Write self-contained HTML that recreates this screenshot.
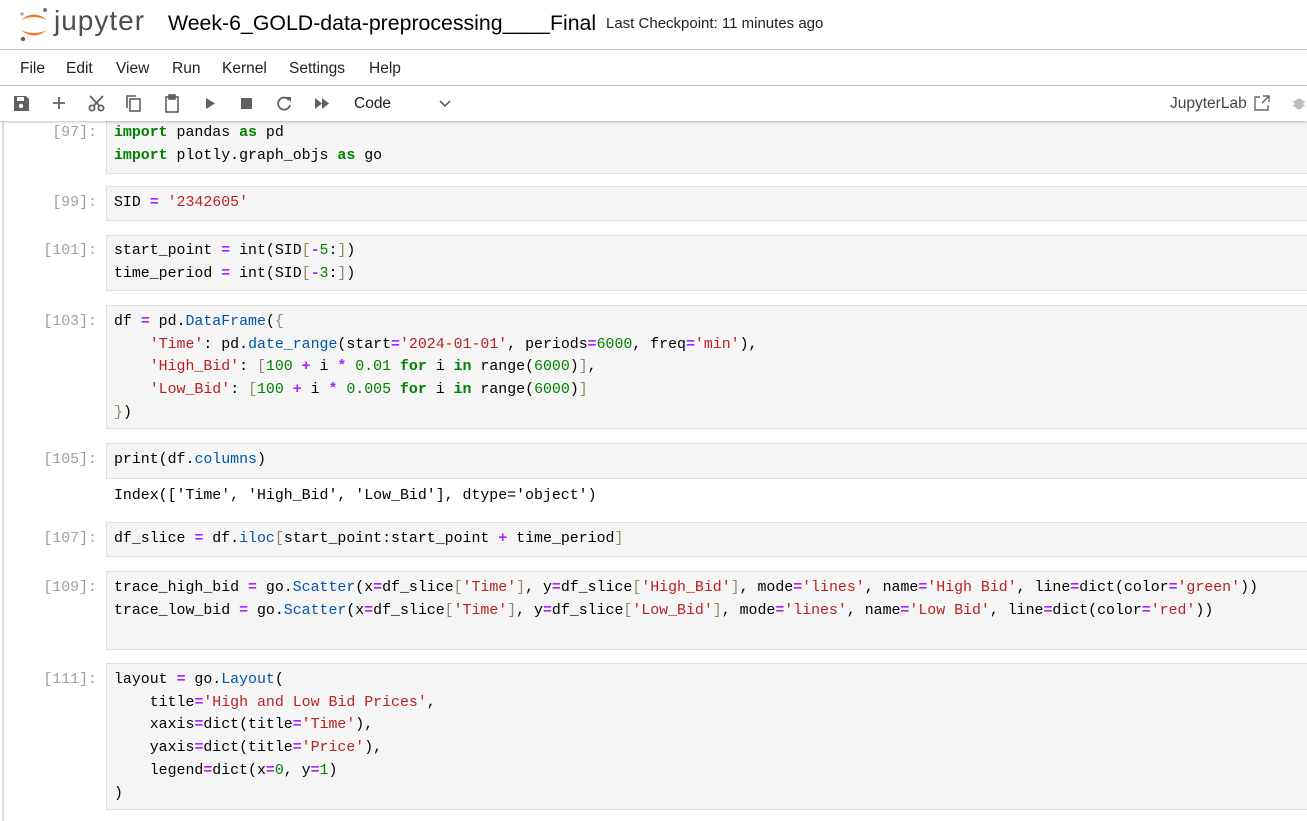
<!DOCTYPE html>
<html><head><meta charset="utf-8"><style>
*{margin:0;padding:0;box-sizing:border-box}
body{width:1307px;height:814px;overflow:hidden;background:#fff;font-family:"Liberation Sans",sans-serif;position:relative;color:#000}
.abs{position:absolute}
.hdr{top:0;left:0;width:1307px;height:50px;border-bottom:1px solid #c8c8c8}
.menu{top:50px;left:0;width:1307px;height:36px;border-bottom:1px solid #c8c8c8;font-size:15.5px;color:#222}
.menu span{position:absolute;top:10px}
.tb{top:86px;left:0;width:1307px;height:35px;box-shadow:0 1px 3px rgba(0,0,0,.25);background:#fff;z-index:5}
.lline{left:2px;top:121px;width:2px;height:700px;background:#dcdcdc}
.cell{position:absolute;left:106px;width:1210px;background:#f5f5f5;border:1px solid #dfdfdf}
pre,.pr{font-family:"Liberation Mono","DejaVu Sans Mono",monospace;font-size:14.9px;line-height:22.7px}
pre{position:absolute;left:114px;color:#000;white-space:pre}
.pr{position:absolute;right:1210px;color:#a0a0a0;white-space:pre}
.k{color:#008000;font-weight:bold}.o{color:#aa22ff;font-weight:bold}.s{color:#ba2121}.n{color:#008000}.p{color:#0055aa}.b{color:#998866}
</style></head><body>
<div class="abs hdr">
<svg class="abs" style="left:17px;top:6px" width="34" height="36" viewBox="0 0 34 36">
<path d="M4 14 Q17 3 30 14 Q17 8 4 14Z" fill="#f37726"/>
<path d="M4 24 Q17 35 30 24 Q17 30 4 24Z" fill="#f37726"/>
<circle cx="28" cy="4" r="2" fill="#767677"/><circle cx="5" cy="8" r="1.6" fill="#9e9e9e"/><circle cx="6" cy="33" r="2.2" fill="#616262"/>
</svg>
<span class="abs" style="left:54px;top:5px;font-size:28px;color:#4e4e4e;letter-spacing:1px">jupyter</span>
<span class="abs" style="left:168px;top:11px;font-size:21.3px">Week-6_GOLD-data-preprocessing____Final</span>
<span class="abs" style="left:606px;top:15px;font-size:15px;color:#222">Last Checkpoint: 11 minutes ago</span>
</div>
<div class="abs menu"><span style="left:20px">File</span><span style="left:66px">Edit</span><span style="left:116px">View</span><span style="left:172px">Run</span><span style="left:222px">Kernel</span><span style="left:289px">Settings</span><span style="left:369px">Help</span></div>
<div class="abs tb">
<svg class="abs" style="left:0;top:0" width="470" height="35" viewBox="0 0 470 35" fill="#616161" stroke="#616161">
<path d="M14 10h12l3 3v12H14z" stroke="none"/><rect x="17" y="11" width="7" height="4" fill="#fff" stroke="none"/><circle cx="21" cy="20" r="2.2" fill="#fff" stroke="none"/>
<path d="M53 17h12M59 11v12" stroke-width="1.8" fill="none"/>
<g fill="none" stroke-width="1.8"><circle cx="92" cy="22" r="2.6"/><circle cx="101" cy="22" r="2.6"/><path d="M93.5 20L103 10M99.5 20L90 10"/></g>
<g fill="none" stroke-width="1.6"><rect x="130" y="13" width="10" height="12"/><path d="M127 22V10h9"/></g>
<g fill="none" stroke-width="1.6"><rect x="166" y="11" width="12" height="15"/><rect x="169" y="9" width="6" height="4" fill="#616161"/></g>
<path d="M206 12l9 5.5-9 5.5z" stroke="none"/>
<rect x="241" y="12" width="11" height="11" stroke="none"/>
<path d="M289 14a6 6 0 1 0 1 5" fill="none" stroke-width="1.8"/><path d="M286 11l5 0 0 5z" stroke="none"/>
<path d="M315 12l7 5.5-7 5.5zM322 12l7 5.5-7 5.5z" stroke="none"/>
<path d="M440 15l5 5 5-5" fill="none" stroke-width="1.6"/>
</svg>
<span class="abs" style="left:354px;top:9px;font-size:15.5px;color:#222">Code</span>
<span class="abs" style="left:1170px;top:9px;font-size:15.5px;color:#444">JupyterLab</span>
<svg class="abs" style="left:1253px;top:8px" width="18" height="18" viewBox="0 0 18 18" fill="none" stroke="#666" stroke-width="1.4"><path d="M7 3H2v13h13v-5M10 2h6v6M16 2l-7 7"/></svg>
<svg class="abs" style="left:1291px;top:9px" width="16" height="16" viewBox="0 0 16 16" fill="#bbb"><ellipse cx="8" cy="9" rx="4.5" ry="5.5"/><path d="M2 6h12v1.5H2zM2 10h12v1.5H2z" fill="#bbb"/></svg>
</div>
<div class="abs lline"></div>

<div class="cell" style="top:108px;height:66px"></div>
<div class="pr" style="top:122px">[97]:</div>
<pre style="top:122px"><span class="k">import</span> pandas <span class="k">as</span> pd
<span class="k">import</span> plotly.graph_objs <span class="k">as</span> go</pre>

<div class="cell" style="top:186px;height:35px"></div>
<div class="pr" style="top:192px">[99]:</div>
<pre style="top:192px">SID <span class="o">=</span> <span class="s">'2342605'</span></pre>

<div class="cell" style="top:235px;height:56px"></div>
<div class="pr" style="top:240px">[101]:</div>
<pre style="top:240px">start_point <span class="o">=</span> int(SID<span class="b">[</span><span class="o">-</span><span class="n">5</span>:<span class="b">]</span>)
time_period <span class="o">=</span> int(SID<span class="b">[</span><span class="o">-</span><span class="n">3</span>:<span class="b">]</span>)</pre>

<div class="cell" style="top:305px;height:124px"></div>
<div class="pr" style="top:311px">[103]:</div>
<pre style="top:311px">df <span class="o">=</span> pd.<span class="p">DataFrame</span>(<span class="b">{</span>
    <span class="s">'Time'</span>: pd.<span class="p">date_range</span>(start<span class="o">=</span><span class="s">'2024-01-01'</span>, periods<span class="o">=</span><span class="n">6000</span>, freq<span class="o">=</span><span class="s">'min'</span>),
    <span class="s">'High_Bid'</span>: <span class="b">[</span><span class="n">100</span> <span class="o">+</span> i <span class="o">*</span> <span class="n">0.01</span> <span class="k">for</span> i <span class="k">in</span> range(<span class="n">6000</span>)<span class="b">]</span>,
    <span class="s">'Low_Bid'</span>: <span class="b">[</span><span class="n">100</span> <span class="o">+</span> i <span class="o">*</span> <span class="n">0.005</span> <span class="k">for</span> i <span class="k">in</span> range(<span class="n">6000</span>)<span class="b">]</span>
<span class="b">}</span>)</pre>

<div class="cell" style="top:443px;height:36px"></div>
<div class="pr" style="top:449px">[105]:</div>
<pre style="top:449px">print(df.<span class="p">columns</span>)</pre>
<pre style="top:485px">Index(['Time', 'High_Bid', 'Low_Bid'], dtype='object')</pre>

<div class="cell" style="top:522px;height:35px"></div>
<div class="pr" style="top:528px">[107]:</div>
<pre style="top:528px">df_slice <span class="o">=</span> df.<span class="p">iloc</span><span class="b">[</span>start_point:start_point <span class="o">+</span> time_period<span class="b">]</span></pre>

<div class="cell" style="top:571px;height:79px"></div>
<div class="pr" style="top:577px">[109]:</div>
<pre style="top:577px">trace_high_bid <span class="o">=</span> go.<span class="p">Scatter</span>(x<span class="o">=</span>df_slice<span class="b">[</span><span class="s">'Time'</span><span class="b">]</span>, y<span class="o">=</span>df_slice<span class="b">[</span><span class="s">'High_Bid'</span><span class="b">]</span>, mode<span class="o">=</span><span class="s">'lines'</span>, name<span class="o">=</span><span class="s">'High Bid'</span>, line<span class="o">=</span>dict(color<span class="o">=</span><span class="s">'green'</span>))
trace_low_bid <span class="o">=</span> go.<span class="p">Scatter</span>(x<span class="o">=</span>df_slice<span class="b">[</span><span class="s">'Time'</span><span class="b">]</span>, y<span class="o">=</span>df_slice<span class="b">[</span><span class="s">'Low_Bid'</span><span class="b">]</span>, mode<span class="o">=</span><span class="s">'lines'</span>, name<span class="o">=</span><span class="s">'Low Bid'</span>, line<span class="o">=</span>dict(color<span class="o">=</span><span class="s">'red'</span>))</pre>

<div class="cell" style="top:663px;height:147px"></div>
<div class="pr" style="top:669px">[111]:</div>
<pre style="top:669px">layout <span class="o">=</span> go.<span class="p">Layout</span>(
    title<span class="o">=</span><span class="s">'High and Low Bid Prices'</span>,
    xaxis<span class="o">=</span>dict(title<span class="o">=</span><span class="s">'Time'</span>),
    yaxis<span class="o">=</span>dict(title<span class="o">=</span><span class="s">'Price'</span>),
    legend<span class="o">=</span>dict(x<span class="o">=</span><span class="n">0</span>, y<span class="o">=</span><span class="n">1</span>)
)</pre>
</body></html>
